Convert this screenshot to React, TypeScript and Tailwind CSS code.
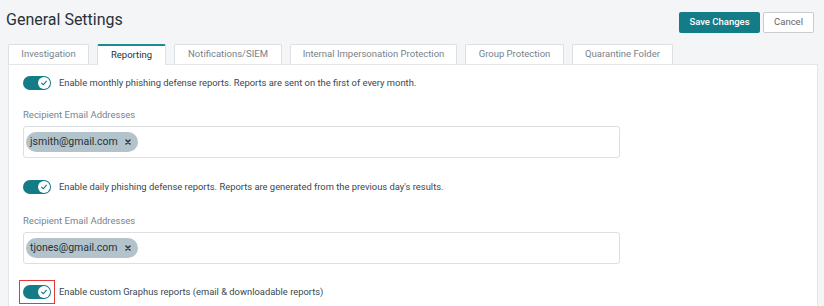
import { useState } from 'react';

const tabs = [
  { label: 'Investigation', w: 'w-[81px]' },
  { label: 'Reporting', w: 'w-[69px]' },
  { label: 'Notifications/SIEM', w: 'w-[108px]' },
  { label: 'Internal Impersonation Protection', w: 'w-[167px]' },
  { label: 'Group Protection', w: 'w-[99px]' },
  { label: 'Quarantine Folder', w: 'w-[101px]' },
];

function Toggle({ on, onClick }: { on: boolean; onClick: () => void }) {
  return (
    <button
      onClick={onClick}
      className={`relative shrink-0 w-[28px] h-[14px] rounded-full ${on ? 'bg-[#137c87]' : 'bg-gray-300'}`}
    >
      <span
        className={`absolute top-[1px] ${on ? 'left-[15px]' : 'left-[1px]'} w-[12px] h-[12px] rounded-full bg-white flex items-center justify-center`}
      >
        {on && (
          <svg width="8" height="8" viewBox="0 0 10 10" fill="none">
            <path d="M2 5.2 L4.1 7.2 L8 2.8" stroke="#137c87" strokeWidth="1.4" strokeLinecap="round" strokeLinejoin="round" />
          </svg>
        )}
      </span>
    </button>
  );
}

function EmailField({ email }: { email: string }) {
  return (
    <div className="flex flex-col gap-[4px]">
      <label className="text-[9.5px] text-[#78848e] leading-[14px]">Recipient Email Addresses</label>
      <div className="w-[597px] h-[32px] border border-[#dcdfe3] rounded-[3px] bg-white flex items-center px-[2px]">
        <span className="h-[20px] rounded-full bg-[#b3c3cb] text-[#263238] text-[10.5px] flex items-center pl-[4px] pr-[7px] gap-[7px]">
          {email}
          <svg width="6" height="6" viewBox="0 0 6 6">
            <path d="M1 1 L5 5 M5 1 L1 5" stroke="#263238" strokeWidth="1.5" strokeLinecap="round" />
          </svg>
        </span>
      </div>
    </div>
  );
}

export default function App() {
  const [active, setActive] = useState(1);
  const [toggles, setToggles] = useState([true, true, true]);
  const flip = (i: number) => setToggles(t => t.map((v, j) => (j === i ? !v : v)));

  return (
    <div className="w-[824px] h-[306px] bg-[#f4f5f7] overflow-hidden font-['Roboto',sans-serif] text-[#37474f]">
      <div className="flex items-start justify-between pl-[6px] pr-[10px] pt-[9px] h-[44px]">
        <h1 className="text-[16px] text-[#263238] leading-[22px]">General Settings</h1>
        <div className="flex gap-[3px] mt-[3px]">
          <button className="w-[81px] h-[21px] bg-[#137c87] text-white text-[9.5px] font-medium rounded-[2px]">
            Save Changes
          </button>
          <button className="w-[51px] h-[21px] bg-white border border-[#ccc] text-[#666] text-[9.5px] rounded-[2px]">
            Cancel
          </button>
        </div>
      </div>

      <div className="flex items-end gap-[8px] pl-[8px] h-[20px]">
        {tabs.map((t, i) => (
          <button
            key={t.label}
            onClick={() => setActive(i)}
            className={`${t.w} text-[9.5px] bg-white border-x border-t rounded-t-[2px] border-[#dde0e3] ${
              i === active
                ? 'h-[21px] relative z-10 -mb-px border-t-2 border-t-[#1a8a95] text-[#263238]'
                : 'h-[20px] text-[#78828a]'
            }`}
          >
            {t.label}
          </button>
        ))}
      </div>

      <div className="ml-[8px] w-[810px] h-[300px] bg-white border border-[#e3e6e9] pl-[14px] pt-[11px]">
        <div className="flex items-center gap-[8px] h-[14px]">
          <Toggle on={toggles[0]} onClick={() => flip(0)} />
          <span className="text-[9.4px]">Enable monthly phishing defense reports. Reports are sent on the first of every month.</span>
        </div>
        <div className="mt-[18px]">
          <EmailField email="jsmith@gmail.com" />
        </div>
        <div className="flex items-center gap-[8px] h-[14px] mt-[22px]">
          <Toggle on={toggles[1]} onClick={() => flip(1)} />
          <span className="text-[9.4px]">Enable daily phishing defense reports. Reports are generated from the previous day's results.</span>
        </div>
        <div className="mt-[20px]">
          <EmailField email="tjones@gmail.com" />
        </div>
        <div className="flex items-center gap-[4px] mt-[16px] -ml-[4px]">
          <div className="border border-[#e53935] px-[3px] py-[4px] flex">
            <Toggle on={toggles[2]} onClick={() => flip(2)} />
          </div>
          <span className="text-[9.4px]">Enable custom Graphus reports (email &amp; downloadable reports)</span>
        </div>
      </div>
    </div>
  );
}
